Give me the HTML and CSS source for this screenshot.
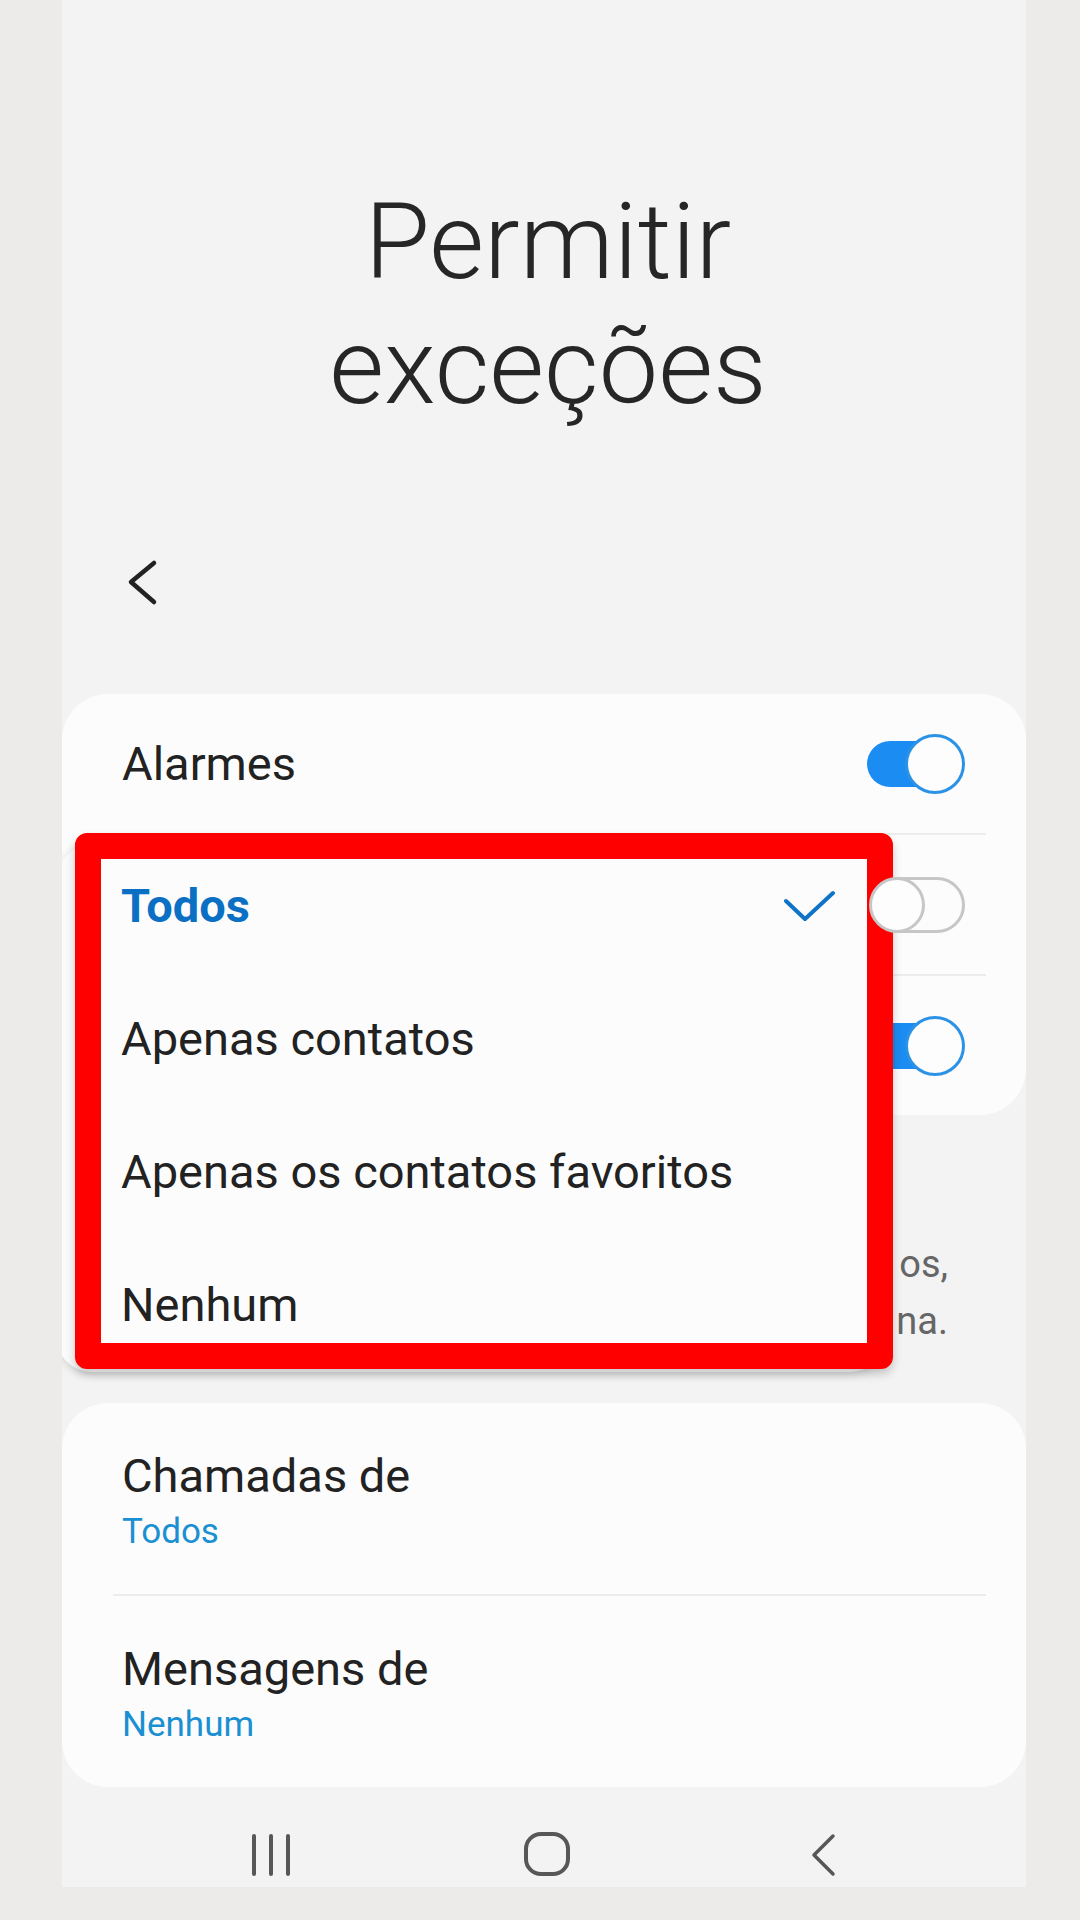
FILE: index.html
```html
<!DOCTYPE html>
<html lang="pt-BR">
<head>
<meta charset="utf-8">
<title>Permitir exceções</title>
<link rel="stylesheet" href="styles.css">
</head>
<body>
<div class="phone">
  <h1 class="title">Permitir<br>exceções</h1>

  <div class="toolbar">
    <svg class="back" width="40" height="48" viewBox="0 0 40 48" aria-hidden="true">
      <path d="M34 5 L11 24 L34 44" fill="none" stroke="#222" stroke-width="4.5" stroke-linecap="round" stroke-linejoin="round"/>
    </svg>
  </div>

  <section class="card card-toggles">
    <div class="row">
      <span class="label">Alarmes</span>
      <span class="switch on"><span class="track"></span><span class="thumb"></span></span>
    </div>
    <div class="sep"></div>
    <div class="row">
      <span class="label"></span>
      <span class="switch off"><span class="thumb"></span><span class="track"></span></span>
    </div>
    <div class="sep"></div>
    <div class="row">
      <span class="label"></span>
      <span class="switch on"><span class="track"></span><span class="thumb"></span></span>
    </div>
  </section>

  <p class="desc">
    <span class="desc-line">os,</span>
    <span class="desc-line">na.</span>
  </p>

  <section class="card card-list">
    <div class="list-row">
      <span class="label">Chamadas de</span>
      <span class="sub">Todos</span>
    </div>
    <div class="sep"></div>
    <div class="list-row">
      <span class="label">Mensagens de</span>
      <span class="sub">Nenhum</span>
    </div>
  </section>

  <nav class="navbar">
    <span class="nav-item">
      <svg width="40" height="44" viewBox="0 0 40 44" aria-hidden="true">
        <path d="M3 3 V41 M20 3 V41 M37 3 V41" stroke="#575757" stroke-width="4" stroke-linecap="round" fill="none"/>
      </svg>
    </span>
    <span class="nav-item">
      <svg width="48" height="46" viewBox="0 0 48 46" aria-hidden="true">
        <rect x="3" y="3" width="42" height="40" rx="15" fill="none" stroke="#575757" stroke-width="4"/>
      </svg>
    </span>
    <span class="nav-item">
      <svg width="28" height="44" viewBox="0 0 28 44" aria-hidden="true">
        <path d="M24 3 L5 22 L24 41" fill="none" stroke="#575757" stroke-width="3.5" stroke-linecap="round" stroke-linejoin="round"/>
      </svg>
    </span>
  </nav>

  <div class="menu-sheet"></div>
  <div class="menu">
    <div class="menu-item selected">
      <span>Todos</span>
      <svg class="check" width="52" height="34" viewBox="0 0 52 34" aria-hidden="true">
        <path d="M2 12 L21 30 L49 4" fill="none" stroke="#0f74c6" stroke-width="4" stroke-linecap="round" stroke-linejoin="round"/>
      </svg>
    </div>
    <div class="menu-item"><span>Apenas contatos</span></div>
    <div class="menu-item"><span>Apenas os contatos favoritos</span></div>
    <div class="menu-item"><span>Nenhum</span></div>
  </div>
</div>
</body>
</html>
```

FILE: styles.css
```css
html, body {
  margin: 0;
  padding: 0;
}

body {
  background: #ecebe9;
  font-family: Roboto, "Noto Sans", "Liberation Sans", sans-serif;
  color: #222;
}

.phone {
  position: relative;
  margin-left: 62px;
  width: 964px;
  height: 1887px;
  background: #f3f3f3;
  display: flex;
  flex-direction: column;
  overflow: hidden;
}

.title {
  margin: 0;
  padding: 180px 0 0 8px;
  font-weight: 300;
  font-size: 106px;
  line-height: 125px;
  text-align: center;
  color: #262626;
}

.toolbar {
  height: 80px;
  margin-top: 112px;
  padding-left: 58px;
  display: flex;
  align-items: center;
}

.card {
  background: #fcfcfc;
  border-radius: 46px;
}

.card-toggles {
  margin-top: 72px;
}

.row {
  height: 139px;
  display: flex;
  align-items: center;
  justify-content: space-between;
  padding: 0 61px 0 60px;
}

.label {
  font-size: 47px;
  line-height: 56px;
  color: #222;
}

.sep {
  height: 2px;
  background: #ececec;
  margin: 0 40px 0 51px;
}

/* switches */
.switch {
  display: flex;
  align-items: center;
}

.switch .thumb {
  box-sizing: border-box;
  border-radius: 50%;
  background: #fdfdfd;
  position: relative;
  z-index: 1;
}

.switch.on .track {
  width: 72px;
  height: 46px;
  border-radius: 23px;
  background: #1a8cf2;
}

.switch.on .thumb {
  width: 60px;
  height: 60px;
  border: 3px solid #2c92e6;
  margin-left: -34px;
}

.switch.off .thumb {
  width: 56px;
  height: 56px;
  border: 3px solid #c6c6c6;
  margin-right: -56px;
}

.switch.off .track {
  box-sizing: border-box;
  width: 96px;
  height: 56px;
  border-radius: 28px;
  border: 3px solid #c6c6c6;
}

.desc {
  margin: 121px 0 0;
  padding: 0 78px 0 60px;
  font-size: 38px;
  line-height: 57px;
  color: #666;
  text-align: right;
}

.desc-line {
  display: block;
  white-space: nowrap;
}

.card-list {
  margin-top: 53px;
}

.list-row {
  display: flex;
  flex-direction: column;
  gap: 6px;
  padding: 45px 60px 40px;
}

.sub {
  font-size: 35px;
  line-height: 44px;
  color: #1a90d2;
}

.navbar {
  flex: 1;
  display: flex;
  justify-content: center;
  align-items: flex-end;
  padding: 0 0 10px 6px;
}

.nav-item {
  width: 276px;
  display: flex;
  justify-content: center;
}

/* popup menu (overlay) */
.menu-sheet {
  position: absolute;
  left: -6px;
  top: 845px;
  width: 830px;
  height: 527px;
  border-radius: 36px;
  background: #fafafa;
  box-shadow: 0 2px 10px rgba(0, 0, 0, 0.14);
}

.menu {
  position: absolute;
  left: 13px;
  top: 833px;
  width: 818px;
  box-sizing: border-box;
  border: 26px solid #ff0000;
  border-radius: 12px;
  background: #fcfcfc;
  padding: 19px 31px 10px 20px;
  display: flex;
  flex-direction: column;
  gap: 77px;
  box-shadow: 0 5px 10px rgba(0, 0, 0, 0.2);
}

.menu-item {
  height: 56px;
  display: flex;
  align-items: center;
  justify-content: space-between;
  font-size: 47px;
  line-height: 56px;
  color: #222;
}

.menu-item.selected {
  color: #0b70c3;
  font-weight: 700;
}
```
